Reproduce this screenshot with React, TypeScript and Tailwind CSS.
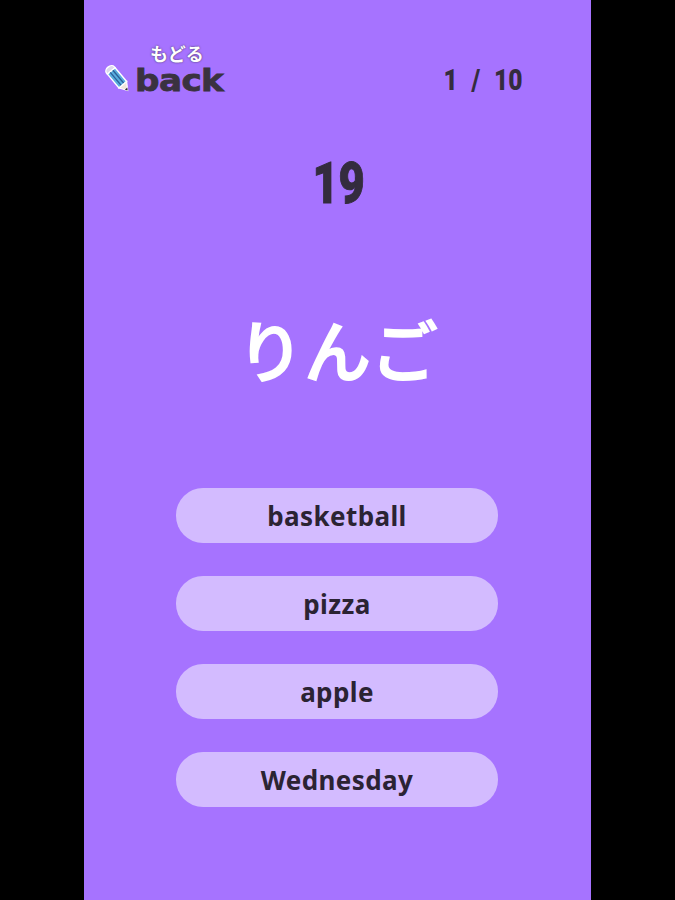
// Quiz screen: back link, progress, countdown, the word, and four answer choices.
const choices = ["basketball", "pizza", "apple", "Wednesday"];

function Pencil() {
  return (
    <svg width="30" height="32" viewBox="0 0 30 32" className="shrink-0 -translate-y-[2px]">
      <g transform="rotate(-40 15 16)">
        <path d="M10 5.5V4a5 3.5 0 0 1 10 0v1.5Z" fill="#dcd8ec" stroke="#ffffff" strokeWidth="1.4" />
        <rect x="10" y="5.5" width="10" height="18" fill="#58aede" stroke="#ffffff" strokeWidth="1.4" />
        <path d="M13.3 6v17M16.7 6v17" stroke="#2d5f98" strokeWidth="1.3" />
        <path d="M10 23.5L15 31L20 23.5Z" fill="#efe6dc" stroke="#ffffff" strokeWidth="1.2" />
        <path d="M13.4 28.6L15 31L16.6 28.6Z" fill="#2f2a38" />
      </g>
    </svg>
  );
}

export default function App() {
  return (
    <div className="flex h-[900px] w-[675px] justify-center overflow-hidden bg-black font-['Noto_Sans','Noto_Sans_CJK_JP',sans-serif]">
      <div className="flex w-[507px] flex-col bg-[#a673ff]">
        <div className="flex h-[110px] items-start justify-between pl-[19px] pr-[68px] pt-[42px]">
          <div className="flex flex-col">
            <span className="ml-[47px] text-[18px] leading-[24px] font-bold text-white [text-shadow:0_0_2px_#3a2f4a]">
              もどる
            </span>
            <div className="-mt-[1px] flex items-center gap-[2px]">
              <Pencil />
              <span className="inline-block origin-left scale-x-[1.14] font-['DejaVu_Sans',sans-serif] text-[30px] leading-[28px] font-bold tracking-[-0.5px] text-[#3a3240] [-webkit-text-stroke:0.8px_#3a3240]">
                back
              </span>
            </div>
          </div>
          <div className="mt-[20px] origin-right scale-x-[0.82] font-['Roboto',sans-serif] text-[30px] leading-[36px] font-black whitespace-pre text-[#342c3e] [word-spacing:1px]">
            1  /  10
          </div>
        </div>

        <div className="mt-[40px] text-center font-['Roboto',sans-serif] text-[58px] leading-[66px] font-black text-[#342c3e] [-webkit-text-stroke:1px_#342c3e]">
          <span className="inline-block translate-x-[1px] scale-x-[0.78]">19</span>
        </div>

        <div className="mt-[90px] text-center text-[67px] leading-[90px] font-medium text-white [-webkit-text-stroke:1.6px_#ffffff]">
          りんご
        </div>

        <div className="mt-[92px] flex flex-col items-center gap-[33px]">
          {choices.map((c) => (
            <button
              key={c}
              className="-ml-[1px] h-[55px] w-[322px] rounded-[27px] bg-[#d3bbff] pt-[2px] text-center text-[26px] font-bold tracking-[0.4px] text-[#2b2333]"
            >
              {c}
            </button>
          ))}
        </div>
      </div>
    </div>
  );
}
